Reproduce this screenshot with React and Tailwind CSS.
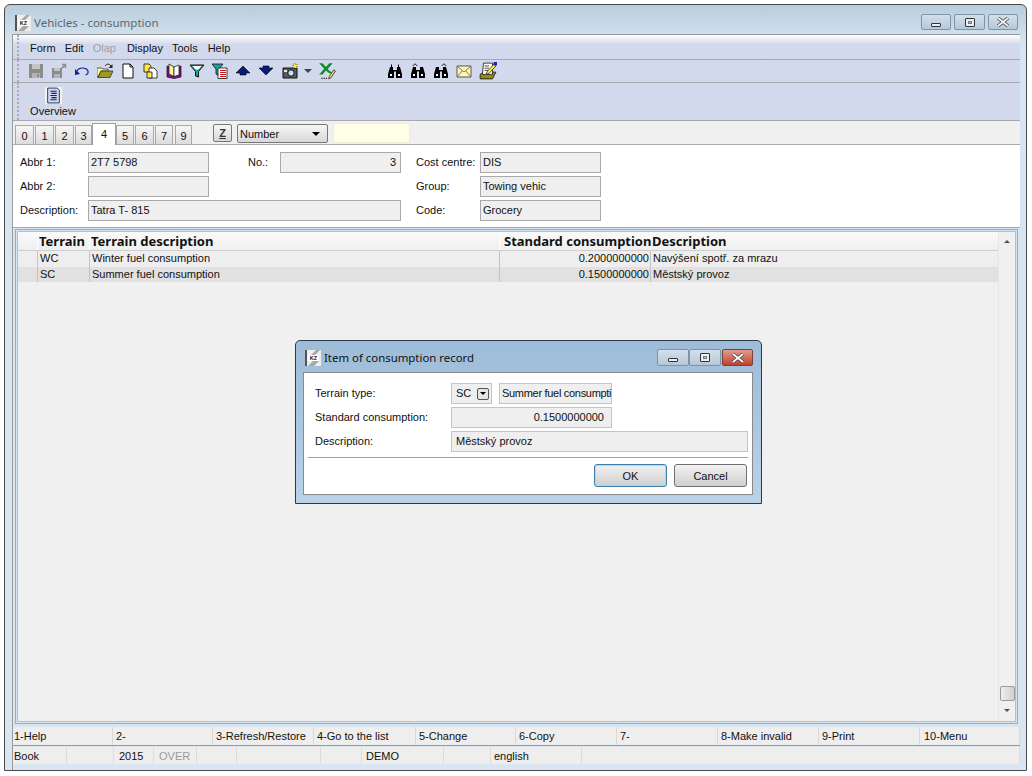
import React from 'react';

// small toolbar pictures, all on a 16 grid
const Ico = ({ children, className = 'w-4 h-4' }) => (
  <svg viewBox="0 0 16 16" className={`${className} shrink-0`}>{children}</svg>
);

const SaveIcon = () => (
  <Ico>
    <path d="M1 1h14v14H1z" fill="#8c8c8c" />
    <path d="M4 1h8v5H4z" fill="#c4c4c4" />
    <path d="M4 10h8v5H4z" fill="#b4b4b4" />
    <path d="M9 11h2v3H9z" fill="#8c8c8c" />
  </Ico>
);
const SaveAsIcon = () => (
  <Ico>
    <path d="M1 5h10v10H1z" fill="#8c8c8c" />
    <path d="M3 5h6v3H3z" fill="#c4c4c4" />
    <path d="M3 11h6v4H3z" fill="#b4b4b4" />
    <path d="M10 6l4-4M11 1.500h3.500V5" stroke="#8c8c8c" strokeWidth="1.500" fill="none" />
  </Ico>
);
const UndoIcon = () => (
  <Ico>
    <path d="M3 8c2-4 9-4 11 0 .5 2-1 3.500-2.500 4" stroke="#0a1f9c" strokeWidth="1.200" fill="none" />
    <path d="M1 6l5 5-5 1z" fill="#0a1f9c" />
  </Ico>
);
const OpenIcon = () => (
  <Ico>
    <path d="M0 5h5l1 1h5v2H4L1 14H0z" fill="#ffff99" stroke="#222" strokeWidth=".7" />
    <path d="M4 8h12l-3 6.500H1z" fill="#9c9a22" stroke="#222" strokeWidth=".7" />
    <path d="M8 3c2-2.500 4-2.500 6 0" stroke="#222" fill="none" />
    <path d="M15.500 1v4h-4z" fill="#222" />
  </Ico>
);
const NewIcon = () => (
  <Ico>
    <path d="M3 1h7l3 3v11H3z" fill="#fff" stroke="#111" />
    <path d="M10 1v3h3" fill="none" stroke="#111" />
  </Ico>
);
const CopyIcon = () => (
  <Ico>
    <path d="M1 1h5l2 2v6H1z" fill="#ffe94a" stroke="#111" strokeWidth=".8" />
    <path d="M6 5h5l3 3v7H6z" fill="#fff" stroke="#111" strokeWidth=".8" />
    <path d="M4 9h5v6H4z" fill="#ffe94a" stroke="#111" strokeWidth=".8" />
  </Ico>
);
const BookIcon = () => (
  <Ico>
    <path d="M1 3l7 2 7-2v11l-7 1.500L1 14z" fill="#800f80" stroke="#30103a" strokeWidth=".8" />
    <path d="M3 1l5 3v9.500L3 11z" fill="#fff79a" stroke="#222" strokeWidth=".8" />
    <path d="M8 4l5-2v10l-5 1.500z" fill="#fff" stroke="#222" strokeWidth=".8" />
  </Ico>
);
const FilterIcon = () => (
  <Ico>
    <path d="M1 2h14L9.500 8.500V14l-3-1V8.500z" fill="#1fa3a3" stroke="#111" />
    <path d="M3.500 3h9l-3 3.500h-3z" fill="#ffffff" />
  </Ico>
);
const FilterListIcon = () => (
  <Ico>
    <path d="M0 1h11L7 6v7L4 11V6z" fill="#1fa3a3" stroke="#111" strokeWidth=".8" />
    <path d="M6 5h9v10.500H6z" fill="#fff" stroke="#111" strokeWidth=".8" />
    <path d="M8 7.500h6M8 9.500h6M8 11.500h6M8 13.500h6" stroke="#d01818" />
  </Ico>
);
const UpIcon = () => (
  <Ico>
    <path d="M8 3l7 7h-4v2H5v-2H1z" fill="#0a1a78" stroke="#000" strokeWidth=".6" />
  </Ico>
);
const DownIcon = () => (
  <Ico>
    <path d="M5 3h6v2h4l-7 7-7-7h4z" fill="#0a1a78" stroke="#000" strokeWidth=".6" />
  </Ico>
);
const CameraIcon = () => (
  <Ico>
    <path d="M1 5h14v10H1z" fill="#5a5a5a" stroke="#111" />
    <circle cx="9" cy="10" r="3.200" fill="#bfe3f5" stroke="#111" />
    <path d="M2 7h3v2H2z" fill="#e8e8e8" />
    <path d="M11 1h4v4h-4z" fill="#ffe94a" stroke="#111" strokeWidth=".6" strokeDasharray="1 1" />
  </Ico>
);
const ExcelIcon = () => (
  <Ico className="w-[18px] h-[18px]">
    <path d="M1 1h3l3 3.500L10 1h3L8.500 6.500 13 10h-3L7 7.500 4 11H1l4.500-5z" fill="#118a2e" />
    <path d="M10 13l4-6 1.500 1-4 6-2 1z" fill="#ffe94a" stroke="#222" strokeWidth=".7" />
    <path d="M3 14.500h1M5 14.500h1M7 14.500h1" stroke="#111" />
  </Ico>
);
const BinocularIcon = ({ arrow }) => (
  <Ico>
    <path d="M3 4h3v3h4V4h3l2 7v4H9V8.500H7V15H1v-4z" fill="#000" />
    <path d="M3 11h2v2H3zM11 11h2v2h-2z" fill="#fff" />
    {!arrow && <path d="M4 1.500h1V4H4zM11 1.500h1V4h-1z" fill="#000" />}
    {arrow === 'left' && <path d="M3 3c1-2.500 3-2.500 4 0" stroke="#111" fill="none" />}
    {arrow === 'right' && <path d="M9 3c1-2.500 3-2.500 4 0" stroke="#111" fill="none" />}
  </Ico>
);
const MailIcon = () => (
  <Ico>
    <path d="M1 3h14v11H1z" fill="#fff6b0" stroke="#555" />
    <path d="M1 3l7 6 7-6M1 14l5-6M15 14l-5-6" stroke="#777" fill="none" />
  </Ico>
);
const NoteIcon = () => (
  <Ico className="w-[18px] h-[18px]">
    <path d="M1 11l3-2h11l-3 6H1z" fill="#8f8d18" stroke="#111" strokeWidth=".7" />
    <path d="M4 1h8v10H3z" fill="#fff" stroke="#111" strokeWidth=".7" />
    <path d="M5 3.500h4M5 5.500h4M5 7.500h3" stroke="#222" strokeWidth=".7" />
    <path d="M7 9l6-7 2 1.500-6 6.500-2.500 1z" fill="#ffe94a" stroke="#111" strokeWidth=".6" />
    <path d="M13 0h3v3h-3z" fill="#1a2a9c" />
  </Ico>
);
const OverviewIcon = () => (
  <Ico className="w-[17px] h-[17px]">
    <path d="M0 0h16v16H0z" fill="#f2f2f2" />
    <path d="M2.500 1h9l2 2v12h-11z" fill="#cfd8f0" stroke="#222" strokeWidth=".8" />
    <path d="M5 4h6M6 6h5M5 8h6M6 10h5M5 12h6" stroke="#10189c" />
  </Ico>
);
const KzLogo = () => (
  <svg viewBox="0 0 16 16" className="w-4 h-4 shrink-0">
    <path d="M0 0h16v16H0z" fill="#eeeeee" />
    <path d="M0 0h2v16H0z" fill="#555" />
    <path d="M6 5l5-5h4l-5 5zM3 16l5-5h6l-5 5z" fill="#a8a8a8" />
    <path d="M3 5h11v6H3z" fill="#fff" />
    <text x="8.500" y="10" textAnchor="middle" fontSize="5.500" fontWeight="700" fontFamily="Liberation Sans, sans-serif" fill="#111">KZ</text>
  </svg>
);

const Gripper = () => <div className="w-0 h-full ml-[4px] mr-[5px] border-l-2 border-dotted border-[#a9acb5]" />;

const CapBtn = ({ children, className = '' }) => (
  <div className={`flex items-center justify-center border border-[#8094a8] rounded-[2px] bg-gradient-to-b from-[#d4e0ea] to-[#b5c8d8] ${className}`}>
    {children}
  </div>
);

const MinGlyph = () => <div className="w-[10px] h-[4px] mt-[5px] border border-[#333] bg-[#e8eef4] rounded-[1px]" />;
const MaxGlyph = () => (
  <div className="w-[10px] h-[9px] border border-[#333] bg-[#e8eef4] rounded-[1px] flex items-center justify-center">
    <div className="w-[4px] h-[3px] bg-[#b5c8d8] border border-[#777]" />
  </div>
);
const CloseGlyph = ({ color = '#f2f5f8' }) => (
  <svg viewBox="0 0 14 10" className="w-[14px] h-[10px]">
    <path d="M2 1l10 8M12 1L2 9" stroke="#444" strokeWidth="3.400" />
    <path d="M2 1l10 8M12 1L2 9" stroke={color} strokeWidth="1.800" />
  </svg>
);

const Field = ({ className = '', right, children }) => (
  <div className={`h-[21px] border border-[#a9a9a9] bg-[#efefef] flex items-center px-[2px] text-[#111] whitespace-nowrap overflow-hidden ${right ? 'justify-end' : ''} ${className}`}>
    {children}
  </div>
);

const tabs = ['0', '1', '2', '3', '4', '5', '6', '7', '9'];
const tabWidths = {
  0: 'w-[19px] ml-[2px]', 1: 'w-[19px] ml-[1px]', 2: 'w-[19px] ml-[1px]', 3: 'w-[17px] ml-[1px]',
  5: 'w-[18px]', 6: 'w-[19px] ml-[1px]', 7: 'w-[18px] ml-[1px]', 9: 'w-[17px] ml-[2px]',
};

const fkeys = [
  ['1-Help', 'w-[100px] pl-[1px]'], ['2-', 'w-[100px] pl-[3px]'], ['3-Refresh/Restore', 'w-[101px] pl-[3px]'], ['4-Go to the list', 'w-[102px] pl-[3px]'],
  ['5-Change', 'w-[100px] pl-[3px]'], ['6-Copy', 'w-[101px] pl-[3px]'], ['7-', 'w-[101px] pl-[3px]'], ['8-Make invalid', 'w-[101px] pl-[3px]'],
  ['9-Print', 'w-[101px] pl-[3px]'], ['10-Menu', 'flex-1 pl-[4px]'],
];

const statusCells = [
  ['Book', 'w-[54px]', 'pl-[1px]'], ['', 'w-[47px]', ''], ['2015', 'w-[40px]', 'pl-[5px]'], ['OVER', 'w-[43px]', 'pl-[5px] text-[#9a9a9a]'],
  ['', 'w-[40px]', ''], ['', 'w-[84px]', ''], ['', 'w-[41px]', ''], ['DEMO', 'w-[82px]', 'pl-[4px]'],
  ['', 'w-[47px]', ''], ['english', 'w-[91px]', 'pl-[3px]'], ['', 'flex-1', ''],
];

const rows = [
  { code: 'WC', name: 'Winter fuel consumption', val: '0.2000000000', desc: 'Navýšení spotř. za mrazu', bg: 'bg-[#eeeeee]' },
  { code: 'SC', name: 'Summer fuel consumption', val: '0.1500000000', desc: 'Městský provoz', bg: 'bg-[#e1e1e1]' },
];

export default function App() {
  return (
    <div className="relative w-[1032px] h-[776px] bg-white overflow-hidden pt-[4px] pl-[4px] text-[11px] leading-none text-[#111] font-[Liberation_Sans,sans-serif]">
      {/* main window */}
      <div className="w-[1023px] h-[767px] border border-[#4a4a4a] rounded-t-[6px] bg-gradient-to-b from-[#b8cddc] via-[#d6e5f1] via-[5%] to-[#d9e6f2] flex flex-col pl-[7px] pr-[6px]">
        <div className="h-[29px] shrink-0 flex items-center pl-[3px] pt-[6px]">
          <KzLogo />
          <span className="ml-[3px] text-[11.5px] text-[#5c6670] font-[Noto_Sans,sans-serif] pt-[1px]">Vehicles - consumption</span>
          <div className="ml-auto mr-[2px] -mt-[1px] flex gap-[3px]">
            <CapBtn className="w-[30px] h-[16px]"><MinGlyph /></CapBtn>
            <CapBtn className="w-[31px] h-[16px]"><MaxGlyph /></CapBtn>
            <CapBtn className="w-[30px] h-[16px]"><CloseGlyph /></CapBtn>
          </div>
        </div>

        <div className="flex-1 min-h-0 flex flex-col border-t border-l border-[#9a9a9a]">
          {/* menu */}
          <div className="h-[25px] shrink-0 flex items-center bg-gradient-to-b from-white via-[#d3d9ec] via-[40%] to-[#d3d9ec] border-b border-[#a6a8ae]">
            <Gripper />
            <div className="flex gap-[9px] pl-[6px] pt-[3px]">
              <span>Form</span>
              <span>Edit</span>
              <span className="text-[#a0a0a0]">Olap</span>
              <span className="ml-[2px]">Display</span>
              <span>Tools</span>
              <span className="ml-[1px]">Help</span>
            </div>
          </div>

          {/* icon toolbar */}
          <div className="h-[23px] shrink-0 flex items-center bg-[#d3d9ec] border-b border-[#a6a8ae]">
            <Gripper />
            <div className="flex items-center gap-[7px] pl-[4px]">
              <SaveIcon />
              <SaveAsIcon />
              <UndoIcon />
              <OpenIcon />
              <NewIcon />
              <CopyIcon />
              <BookIcon />
              <FilterIcon />
              <FilterListIcon />
              <UpIcon />
              <DownIcon />
              <div className="ml-[1px]"><CameraIcon /></div>
            </div>
            <div className="ml-[6px] w-0 h-0 border-x-[4px] border-x-transparent border-t-[4px] border-t-[#444]" />
            <div className="ml-[6px]"><ExcelIcon /></div>
            <div className="flex items-center gap-[7px] ml-[51px]">
              <BinocularIcon />
              <BinocularIcon arrow="left" />
              <BinocularIcon arrow="right" />
              <MailIcon />
              <NoteIcon />
            </div>
          </div>

          {/* overview */}
          <div className="h-[38px] shrink-0 flex bg-[#d3d9ec] border-b border-[#a6a8ae]">
            <Gripper />
            <div className="ml-[6px] flex flex-col items-center pt-[4px] w-[46px]">
              <OverviewIcon />
              <span className="mt-[2px]">Overview</span>
            </div>
          </div>

          {/* tabs row */}
          <div className="h-[24px] shrink-0 flex items-end bg-[#f0f0f0] border-b border-[#a9a9a9]">
            {tabs.map((t) =>
              t === '4' ? (
                <div key={t} className="w-[24px] h-[22px] -mb-px bg-white border border-b-0 border-[#a0a0a0] flex justify-center pt-[5px]">{t}</div>
              ) : (
                <div key={t} className={`${tabWidths[t]} h-[19px] bg-gradient-to-b from-[#f6f6f6] to-[#dcdcdc] border border-b-0 border-[#a8a8a8] flex justify-center pt-[5px]`}>{t}</div>
              )
            )}
            <div className="self-start mt-[3px] ml-[21px] w-[19px] h-[18px] border border-[#777] rounded-[2px] bg-gradient-to-b from-[#f6f6f6] to-[#d8d8d8] flex items-center justify-center underline font-bold text-[#333]">Z</div>
            <div className="self-start mt-[3px] ml-[5px] w-[91px] h-[19px] border border-[#777] rounded-[2px] bg-gradient-to-b from-[#f6f6f6] to-[#d8d8d8] flex items-center pl-[2px] justify-between pr-[7px]">
              <span className="pt-[1px]">Number</span>
              <div className="w-0 h-0 border-x-[4px] border-x-transparent border-t-[4px] border-t-black" />
            </div>
            <div className="self-start mt-[2px] ml-[5px] w-[77px] h-[20px] bg-[#ffffe6] border border-[#ededdd] rounded-[2px]" />
          </div>

          {/* header form */}
          <div className="h-[83px] shrink-0 bg-white pt-[7px] pl-[7px] flex flex-col gap-[3px] border-b border-[#a9a9a9]">
            <div className="flex items-center">
              <span className="w-[68px]">Abbr 1:</span>
              <Field className="w-[121px]">2T7 5798</Field>
              <span className="w-[32px] ml-[39px]">No.:</span>
              <Field className="w-[121px]" right><span className="pr-[2px]">3</span></Field>
              <span className="w-[64px] ml-[15px]">Cost centre:</span>
              <Field className="w-[121px]">DIS</Field>
            </div>
            <div className="flex items-center">
              <span className="w-[68px]">Abbr 2:</span>
              <Field className="w-[121px]" />
              <span className="w-[207px]" />
              <span className="w-[64px]">Group:</span>
              <Field className="w-[121px]">Towing vehic</Field>
            </div>
            <div className="flex items-center">
              <span className="w-[68px]">Description:</span>
              <Field className="w-[313px]">Tatra T- 815</Field>
              <span className="w-[64px] ml-[15px]">Code:</span>
              <Field className="w-[121px]">Grocery</Field>
            </div>
          </div>

          {/* grid */}
          <div className="flex-1 min-h-0 mt-px border border-[#a9a9a9] mr-[2px] ml-[2px] p-[1px]">
            <div className="h-full border border-[#bdbdbd] bg-[#f0f0f0] flex">
              <div className="flex-1 min-w-0">
                <div className="h-[19px] flex font-[Noto_Sans,sans-serif] font-bold text-[13px] bg-gradient-to-b from-[#fafafa] to-[#efefef] border-b border-[#cfcfcf]">
                  <div className="w-[20px] border-r border-white" />
                  <div className="w-[52px] pl-[1px] pt-[3px] border-r border-white whitespace-nowrap">Terrain</div>
                  <div className="w-[410px] pl-[1px] pt-[3px] border-r border-white">Terrain description</div>
                  <div className="w-[151px] pl-[4px] pt-[3px] border-r border-white whitespace-nowrap">Standard consumption</div>
                  <div className="flex-1 pl-[1px] pt-[3px]">Description</div>
                </div>
                {rows.map((r) => (
                  <div key={r.code} className={`h-[15.500px] flex items-center ${r.bg}`}>
                    <div className="w-[20px] h-full border-r border-[#c4c4c4]" />
                    <div className="w-[52px] h-full pl-[2px] flex items-center border-r border-[#c4c4c4]">{r.code}</div>
                    <div className="w-[410px] h-full pl-[2px] flex items-center border-r border-[#c4c4c4]">{r.name}</div>
                    <div className="w-[151px] h-full pr-[1px] flex items-center justify-end border-r border-[#c4c4c4]">{r.val}</div>
                    <div className="flex-1 h-full pl-[2px] flex items-center">{r.desc}</div>
                  </div>
                ))}
              </div>
              {/* scrollbar */}
              <div className="w-[17px] shrink-0 flex flex-col items-center pt-[8px] pb-[9px] border-l border-[#e6e6e6]">
                <div className="w-0 h-0 border-x-[3px] border-x-transparent border-b-[3px] border-b-[#555]" />
                <div className="mt-auto w-[15px] h-[15px] border border-[#9a9a9a] rounded-[2px] bg-gradient-to-r from-[#f0f0f0] to-[#cfcfcf]" />
                <div className="mt-[8px] w-0 h-0 border-x-[3px] border-x-transparent border-t-[3px] border-t-[#555]" />
              </div>
            </div>
          </div>

          {/* function keys */}
          <div className="h-[19px] shrink-0 mt-[3px] flex bg-[#f0eeec] border-b border-[#9a9a9a]">
            {fkeys.map(([label, w]) => (
              <div key={label} className={`${w} h-full flex items-center border-r border-[#d8d8d8] whitespace-nowrap`}>{label}</div>
            ))}
          </div>
          {/* status */}
          <div className="h-[17px] shrink-0 mt-px flex bg-[#f0eeec]">
            {statusCells.map(([label, w, extra], i) => (
              <div key={i} className={`${w} ${extra} h-full flex items-center pt-[1px] border-r border-[#dcdcdc] whitespace-nowrap`}>{label}</div>
            ))}
          </div>
          <div className="h-[6px] shrink-0 bg-[#d9e6f2]" />
        </div>
      </div>

      {/* modal dialog */}
      <div className="absolute left-[295px] top-[340px] w-[467px] h-[164px] border border-[#2b3a4a] rounded-t-[5px] bg-gradient-to-b from-[#9dbcd8] to-[#b9d2e8] flex flex-col pl-[7px] pr-[8px] pb-[8px]">
        <div className="h-[31px] shrink-0 flex items-center pl-[2px] pt-[3px]">
          <KzLogo />
          <span className="ml-[3px] text-[11.4px] font-[Noto_Sans,sans-serif]">Item of consumption record</span>
          <div className="ml-auto flex -mt-[1px]">
            <CapBtn className="w-[32px] h-[17px]"><MinGlyph /></CapBtn>
            <CapBtn className="w-[32px] h-[17px]"><MaxGlyph /></CapBtn>
            <div className="w-[31px] h-[17px] ml-[1px] flex items-center justify-center border border-[#7a4038] rounded-[2px] bg-gradient-to-b from-[#e09a8c] to-[#c0402c]">
              <CloseGlyph color="#ffffff" />
            </div>
          </div>
        </div>
        <div className="flex-1 min-h-0 bg-white border border-[#8a8a8a] flex flex-col pt-[10px] px-[4px]">
          <div className="flex items-center h-[21px] pl-[7px]">
            <span className="w-[136px]">Terrain type:</span>
            <div className="w-[41px] h-[21px] border border-[#c4c4c4] bg-[#efefef] flex items-center pl-[4px]">
              SC
              <div className="ml-[6px] w-[12px] h-[12px] border border-[#555] rounded-[2px] bg-[#e4e4e4] flex items-center justify-center">
                <div className="w-0 h-0 border-x-[3px] border-x-transparent border-t-[3px] border-t-black" />
              </div>
            </div>
            <div className="ml-[7px] w-[113px] h-[21px] border border-[#c4c4c4] bg-[#efefef] flex items-center pl-[2px] whitespace-nowrap tracking-[-0.3px]">Summer fuel consumpti</div>
          </div>
          <div className="flex items-center h-[21px] mt-[3px] pl-[7px]">
            <span className="w-[136px]">Standard consumption:</span>
            <div className="w-[161px] h-[21px] border border-[#c4c4c4] bg-[#efefef] flex items-center justify-end pr-[7px]">0.1500000000</div>
          </div>
          <div className="flex items-center h-[21px] mt-[3px] pl-[7px]">
            <span className="w-[136px]">Description:</span>
            <div className="w-[297px] h-[21px] border border-[#c4c4c4] bg-[#efefef] flex items-center pl-[4px]">Městský provoz</div>
          </div>
          <div className="mt-[5px] border-t border-[#a0a0a0]" />
          <div className="flex justify-end gap-[7px] mt-[6px] pr-[1px]">
            <div className="w-[73px] h-[23px] border border-[#3c7fb1] rounded-[3px] bg-gradient-to-b from-[#f2f2f2] to-[#cfcfcf] flex items-center justify-center pt-[1px] shadow-[inset_0_0_0_1px_#9fdcf5]">OK</div>
            <div className="w-[73px] h-[23px] border border-[#707070] rounded-[3px] bg-gradient-to-b from-[#f2f2f2] to-[#cfcfcf] flex items-center justify-center pt-[1px]">Cancel</div>
          </div>
        </div>
      </div>
    </div>
  );
}
